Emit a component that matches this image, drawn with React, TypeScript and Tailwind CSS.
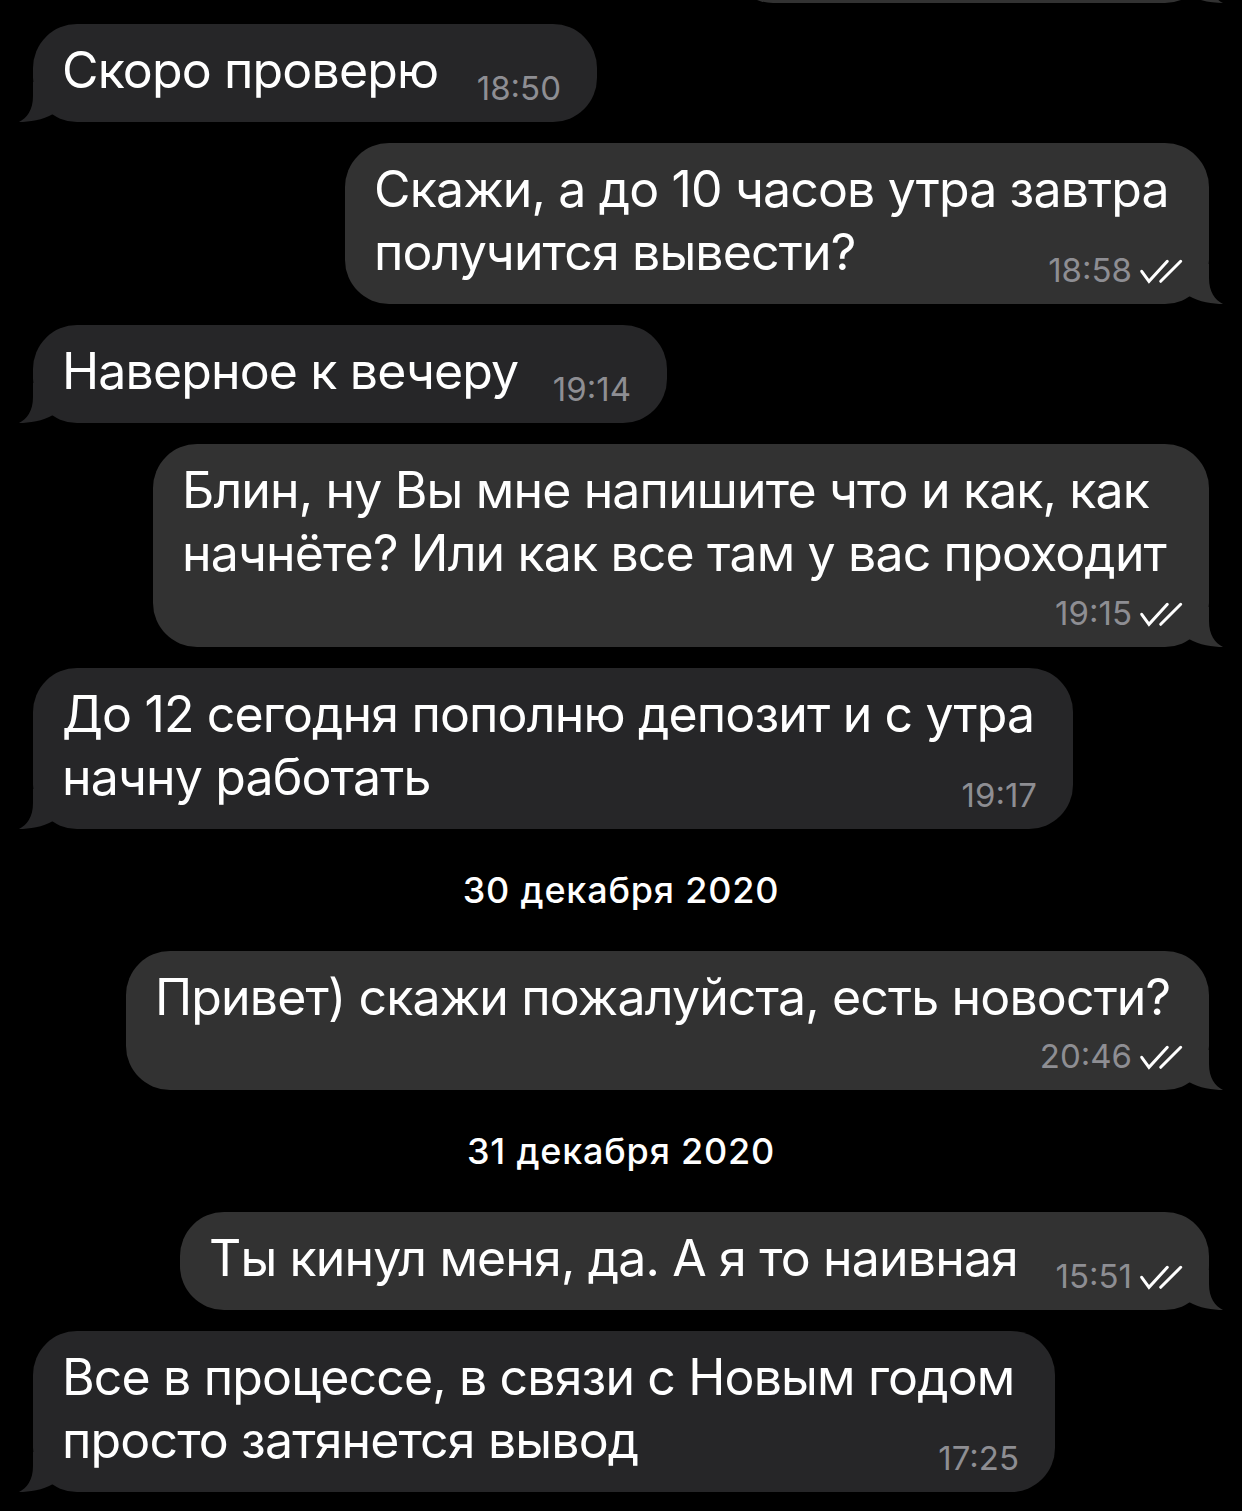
import React from 'react';

interface Message {
  out: boolean;
  width: string;
  lines: string[];
  time: string;
  timeRow?: string;
}

type Item = { kind: 'msg'; msg: Message } | { kind: 'date'; label: string };

const items: Item[] = [
  { kind: 'msg', msg: { out: false, width: 'w-[564px]', lines: ['Скоро проверю'], time: '18:50' } },
  {
    kind: 'msg',
    msg: { out: true, width: 'w-[864px]', lines: ['Скажи, а до 10 часов утра завтра', 'получится вывести?'], time: '18:58' },
  },
  { kind: 'msg', msg: { out: false, width: 'w-[634px]', lines: ['Наверное к вечеру'], time: '19:14' } },
  {
    kind: 'msg',
    msg: {
      out: true,
      width: 'w-[1056px]',
      lines: ['Блин, ну Вы мне напишите что и как, как', 'начнёте? Или как все там у вас проходит'],
      time: '19:15',
      timeRow: 'h-[42px]',
    },
  },
  {
    kind: 'msg',
    msg: { out: false, width: 'w-[1040px]', lines: ['До 12 сегодня пополню депозит и с утра', 'начну работать'], time: '19:17' },
  },
  { kind: 'date', label: '30 декабря 2020' },
  {
    kind: 'msg',
    msg: { out: true, width: 'w-[1083px]', lines: ['Привет) скажи пожалуйста, есть новости?'], time: '20:46', timeRow: 'h-[41px]' },
  },
  { kind: 'date', label: '31 декабря 2020' },
  { kind: 'msg', msg: { out: true, width: 'w-[1029px]', lines: ['Ты кинул меня, да. А я то наивная'], time: '15:51' } },
  {
    kind: 'msg',
    msg: {
      out: false,
      width: 'w-[1022px]',
      lines: ['Все в процессе, в связи с Новым годом', 'просто затянется вывод'],
      time: '17:25',
    },
  },
];

const Tail = ({ out }: { out: boolean }) => (
  <svg
    width="40"
    height="44"
    viewBox="0 0 40 44"
    className={`absolute bottom-0 ${out ? 'right-[-16px] -scale-x-100' : 'left-[-16px]'}`}
    fill={out ? '#323232' : '#262628'}
  >
    <path d="M16,4 L16,18 C16,32 10,40 2,44 C12,44 26,42 36,36 L36,4 Z" />
  </svg>
);

const Checks = () => (
  <svg width="44" height="28" viewBox="0 0 44 28" fill="none" stroke="#ffffff" strokeWidth="3" strokeLinecap="round">
    <path d="M2.7,13.3 L10,23.3 L28.3,3.3" />
    <path d="M21.7,23.3 L41.7,3.3" />
  </svg>
);

const Time = ({ time, out }: { time: string; out: boolean }) => (
  <div className="flex items-end gap-[7px] mb-[-2px] shrink-0">
    <span className="text-[33px] leading-[32px] tracking-[0px] text-[#8e8e93]">{time}</span>
    {out && <Checks />}
  </div>
);

const Bubble = ({ msg }: { msg: Message }) => {
  const last = msg.lines[msg.lines.length - 1];
  const rest = msg.lines.slice(0, -1);
  return (
    <div className={`flex ${msg.out ? 'justify-end' : 'justify-start'}`}>
      <div
        className={`relative ${msg.width} rounded-[44px] pl-[29px] pt-[15px] pb-[20px] ${
          msg.out ? 'bg-[#323232] pr-[26px]' : 'bg-[#262628] pr-[36px]'
        }`}
      >
        {rest.map((line, i) => (
          <div key={i} className="leading-[63px] whitespace-nowrap">
            {line}
          </div>
        ))}
        {msg.timeRow ? (
          <>
            <div className="leading-[63px] whitespace-nowrap">{last}</div>
            <div className={`${msg.timeRow} flex items-end justify-end`}>
              <Time time={msg.time} out={msg.out} />
            </div>
          </>
        ) : (
          <div className="flex items-end justify-between">
            <span className="leading-[63px] whitespace-nowrap">{last}</span>
            <Time time={msg.time} out={msg.out} />
          </div>
        )}
        <Tail out={msg.out} />
      </div>
    </div>
  );
};

export default function App() {
  return (
    <div className="w-[1242px] h-[1511px] bg-black overflow-hidden flex flex-col gap-[21px] px-[33px] text-white text-[50px] tracking-[-0.85px] font-['Inter','Noto_Sans',sans-serif]">
      {/* bottom edge of the previous message, cut off by the top of the screen */}
      <div className="h-[3px] flex justify-end items-end shrink-0">
        <div className="relative w-[480px] h-[98px] shrink-0 rounded-[44px] bg-[#323232]">
          <Tail out />
        </div>
      </div>
      {items.map((item, i) =>
        item.kind === 'date' ? (
          <div key={i} className="h-[80px] shrink-0 flex items-center justify-center text-[36px] font-medium tracking-[0.8px]">
            {item.label}
          </div>
        ) : (
          <Bubble key={i} msg={item.msg} />
        )
      )}
    </div>
  );
}
